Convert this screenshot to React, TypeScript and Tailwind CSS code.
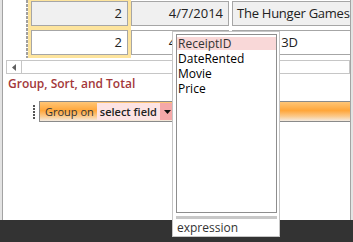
const fields = ["ReceiptID", "DateRented", "Movie", "Price"];

function Cell({ text, shade, align }: { text: string; shade?: boolean; align: "left" | "right" }) {
  return (
    <div
      className={`h-[25px] border border-[#a6a6a6] text-[13px] leading-[23px] whitespace-nowrap ${
        shade ? "bg-[#f0f0f0]" : "bg-white"
      } ${align === "right" ? "text-right pr-[5px]" : "text-left pl-[4px] tracking-[-0.25px]"}`}
    >
      {text}
    </div>
  );
}

export default function App() {
  return (
    <div className="relative w-[353px] h-[242px] overflow-hidden bg-white font-['Open_Sans',sans-serif] text-[#222]">
      <div className="flex h-[220px]">
        <div className="w-[2px] bg-[#e3e3e3]" />
        <div className="w-[1px] bg-[#a3a3a3]" />
        <div className="flex-1 min-w-0 flex flex-col overflow-hidden">
          {/* datasheet rows */}
          <div className="flex h-[58px] overflow-hidden">
            <div className="w-[23px] shrink-0" />
            <div className="w-[2px] shrink-0 bg-[repeating-linear-gradient(to_bottom,#a0a0a0_0px,#a0a0a0_3px,transparent_3px,transparent_4px)]" />
            <div className="w-[103px] shrink-0 bg-[#fde49d] px-[3px] pt-[1px] flex flex-col gap-[4px]">
              <Cell text="2" shade align="right" />
              <Cell text="2" align="right" />
            </div>
            <div className="w-[98px] shrink-0 pt-[1px] flex flex-col gap-[4px]">
              <Cell text="4/7/2014" shade align="right" />
              <Cell text="4/7/2014" align="right" />
            </div>
            <div className="w-[140px] shrink-0 ml-[3px] pt-[1px] flex flex-col gap-[4px]">
              <Cell text="The Hunger Games" shade align="left" />
              <Cell text="Gravity 3D" align="left" />
            </div>
          </div>

          {/* horizontal scrollbar */}
          <div className="mt-[2px] ml-[3px] h-[14px] flex border border-[#c6c6c6]">
            <div className="w-[15px] border-r border-[#c6c6c6] flex items-center justify-center">
              <svg width="4" height="7" viewBox="0 0 4 7">
                <path d="M4 0 L0 3.5 L4 7 Z" fill="#606060" />
              </svg>
            </div>
          </div>

          <div className="mt-[2px] pl-[5px] text-[12px] leading-[16px] font-semibold text-[#a3383a]">
            Group, Sort, and Total
          </div>

          {/* group row */}
          <div className="mt-[9px] flex items-center pl-[30px]">
            <div className="flex flex-col gap-[1px]">
              {[0, 1, 2, 3, 4].map((i) => (
                <div key={i} className="w-[2px] h-[2px] bg-[#555]" />
              ))}
            </div>
            <div className="ml-[4px] flex-1 h-[21px] flex items-center border-y border-l border-[#8a8a8a] bg-[linear-gradient(to_bottom,#ffc677_0%,#ffa63a_45%,#fbc98a_75%,#f3ebe2_100%)] pl-[5px]">
              <span className="text-[11px] leading-[17px] text-[#333]">Group on</span>
              <span className="ml-[3px] h-[17px] px-[3px] bg-[#fde3e3] text-[11px] leading-[17px] font-semibold text-[#222]">
                select field
              </span>
              <span className="h-[17px] w-[15px] bg-[#f5a8a8] flex items-center justify-center">
                <svg width="7" height="4" viewBox="0 0 7 4">
                  <path d="M0 0 H7 L3.5 4 Z" fill="#111" />
                </svg>
              </span>
            </div>
          </div>
        </div>
        <div className="w-[1px] bg-[#a3a3a3]" />
        <div className="w-[2px] bg-[#e3e3e3]" />
      </div>
      <div className="h-[22px] bg-[#333333]" />

      {/* field dropdown */}
      <div className="absolute left-[172px] top-[31px] w-[108px] bg-white border border-[#c6c6c6] pl-[3px] pr-[2px] pt-[2px]">
        <div className="h-[179px] border border-[#8e8e8e] pt-[1px]">
          {fields.map((f, i) => (
            <div
              key={f}
              className={`h-[15px] pl-[1px] text-[12px] leading-[15px] ${
                i === 0
                  ? "bg-[#f9d8d8] text-[#333] shadow-[inset_0_1px_0_#fff,inset_0_-1px_0_#fff]"
                  : "text-black"
              }`}
            >
              {f}
            </div>
          ))}
        </div>
        <div className="mt-[3px] h-[3px] bg-[#c8c8c8]" />
        <div className="h-[17px] pl-[1px] text-[12px] leading-[17px] text-[#333]">expression</div>
      </div>
    </div>
  );
}
